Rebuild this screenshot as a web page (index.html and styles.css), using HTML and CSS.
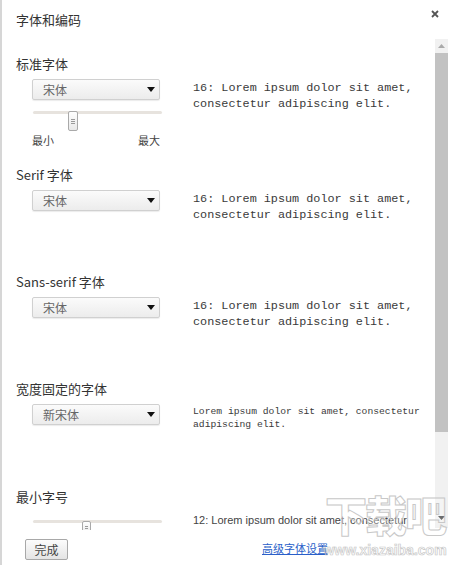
FILE: index.html
```html
<!DOCTYPE html>
<html lang="zh-CN">
<head>
<meta charset="utf-8">
<title>字体和编码</title>
<link rel="stylesheet" href="styles.css">
</head>
<body>
<div class="dialog">
  <header class="header">
    <h1 class="title">字体和编码</h1>
    <button class="close" aria-label="关闭">
      <svg width="8" height="8" viewBox="0 0 8 8"><path d="M1 1L7 7M7 1L1 7" stroke="#555" stroke-width="1.8" fill="none"/></svg>
    </button>
  </header>

  <div class="scroll-area">
    <div class="content">
      <section class="section section-first">
        <div class="label">标准字体</div>
        <div class="row">
          <div class="controls">
            <div class="select"><span>宋体</span><svg class="arrow" width="8" height="5" viewBox="0 0 8 5"><path d="M0 0H8L4 5Z" fill="#111"/></svg></div>
            <div class="slider">
              <div class="track"></div>
              <div class="thumb" style="left:35px"></div>
            </div>
            <div class="minmax"><span>最小</span><span>最大</span></div>
          </div>
          <p class="preview">16: Lorem ipsum dolor sit amet, consectetur adipiscing elit.</p>
        </div>
      </section>

      <section class="section">
        <div class="label">Serif 字体</div>
        <div class="row">
          <div class="controls">
            <div class="select"><span>宋体</span><svg class="arrow" width="8" height="5" viewBox="0 0 8 5"><path d="M0 0H8L4 5Z" fill="#111"/></svg></div>
          </div>
          <p class="preview">16: Lorem ipsum dolor sit amet, consectetur adipiscing elit.</p>
        </div>
      </section>

      <section class="section">
        <div class="label">Sans-serif 字体</div>
        <div class="row">
          <div class="controls">
            <div class="select"><span>宋体</span><svg class="arrow" width="8" height="5" viewBox="0 0 8 5"><path d="M0 0H8L4 5Z" fill="#111"/></svg></div>
          </div>
          <p class="preview">16: Lorem ipsum dolor sit amet, consectetur adipiscing elit.</p>
        </div>
      </section>

      <section class="section section-fixed">
        <div class="label">宽度固定的字体</div>
        <div class="row">
          <div class="controls">
            <div class="select"><span>新宋体</span><svg class="arrow" width="8" height="5" viewBox="0 0 8 5"><path d="M0 0H8L4 5Z" fill="#111"/></svg></div>
          </div>
          <p class="preview preview-mono-small">Lorem ipsum dolor sit amet, consectetur adipiscing elit.</p>
        </div>
      </section>

      <section class="section section-last">
        <div class="label">最小字号</div>
        <div class="row">
          <div class="controls">
            <div class="slider slider-small">
              <div class="track"></div>
              <div class="thumb" style="left:49px"></div>
            </div>
          </div>
          <p class="preview preview-sans">12: Lorem ipsum dolor sit amet, consectetur</p>
        </div>
      </section>
    </div>

    <div class="scrollbar">
      <div class="sb-btn sb-up"><svg width="7" height="4" viewBox="0 0 7 4"><path d="M0 4H7L3.5 0Z" fill="#aaa"/></svg></div>
      <div class="sb-thumb"></div>
      <div class="sb-rest"></div>
      <div class="sb-btn sb-down"><svg width="7" height="4" viewBox="0 0 7 4"><path d="M0 0H7L3.5 4Z" fill="#333"/></svg></div>
    </div>
  </div>

  <footer class="footer">
    <button class="done">完成</button>
    <a class="advanced" href="#">高级字体设置</a>
  </footer>

  <div class="watermark" aria-hidden="true">
    <div class="wm-logo">下载吧</div>
    <div class="wm-url">www.xiazaiba.com</div>
  </div>
</div>
</body>
</html>
```

FILE: styles.css
```css
* { box-sizing: border-box; }

html, body {
  margin: 0;
  padding: 0;
  background: #fff;
}

.dialog {
  position: relative;
  width: 451px;
  height: 565px;
  overflow: hidden;
  background: #fff;
  border-left: 2px solid #d6d6d6;
  font-family: "Noto Sans CJK SC", "Noto Sans", sans-serif;
  color: #333;
}

.header {
  height: 39px;
  padding: 11px 0 0 14px;
}

.title {
  margin: 0;
  font-size: 13px;
  line-height: 18px;
  font-weight: normal;
  color: #333;
}

.close {
  position: absolute;
  top: 9px;
  right: 11px;
  width: 10px;
  height: 10px;
  padding: 0;
  border: 0;
  background: none;
  display: flex;
  align-items: center;
  justify-content: center;
}

.scroll-area {
  display: flex;
  height: 491px;
  overflow: hidden;
}

.content {
  flex: 1;
  padding: 16px 0 0 14px;
}

.section {
  min-height: 107px;
}

.section-first {
  min-height: 111px;
}

.section-fixed {
  min-height: 108px;
}

.label {
  font-size: 13px;
  line-height: 18px;
  color: #333;
  margin-bottom: 6px;
}

.row {
  display: flex;
  padding-left: 16px;
  gap: 33px;
}

.controls {
  width: 128px;
  flex: none;
}

.select {
  height: 21px;
  display: flex;
  align-items: center;
  justify-content: space-between;
  padding: 0 4px 0 10px;
  border: 1px solid #d0d0d0;
  border-radius: 2px;
  background: linear-gradient(#fbfbfb, #ececec);
  box-shadow: 0 1px 1px rgba(0, 0, 0, 0.08);
  font-size: 12px;
  color: #666;
}

.select .arrow {
  display: block;
}

.slider {
  position: relative;
  width: 129px;
  height: 20px;
  margin: 11px 0 0 1px;
}

.track {
  height: 3px;
  margin-top: 8px;
  background: #e7e3de;
  border-radius: 2px;
}

.thumb {
  position: absolute;
  top: 0;
  width: 10px;
  height: 20px;
  border: 1px solid #a9a9a9;
  border-radius: 2px;
  background: linear-gradient(#fefefe, #e9e9e9);
}

.thumb::after {
  content: "";
  position: absolute;
  left: 2px;
  top: 7px;
  width: 4px;
  height: 5px;
  background: linear-gradient(#9a9a9a 0 1px, transparent 1px 2px, #9a9a9a 2px 3px, transparent 3px 4px, #9a9a9a 4px 5px);
}

.slider-small {
  height: 18px;
  margin-top: 0;
}

.slider-small .thumb {
  top: 1px;
  width: 9px;
  height: 14px;
}

.slider-small .thumb::after {
  top: 4px;
  left: 2px;
  width: 3px;
}

.minmax {
  display: flex;
  justify-content: space-between;
  margin-top: 2px;
  font-size: 11px;
  line-height: 14px;
  color: #444;
}

.preview {
  margin: 1px 0 0;
  width: 235px;
  font-family: "Liberation Mono", "DejaVu Sans Mono", monospace;
  font-size: 11.8px;
  line-height: 16px;
  color: #3a3a3a;
}

.preview-mono-small {
  font-size: 9.7px;
  line-height: 13px;
  margin-top: 1px;
}

.preview-sans {
  margin-top: 0;
  white-space: nowrap;
  font-family: "Liberation Sans", "Noto Sans CJK SC", sans-serif;
  font-size: 11px;
  line-height: 17px;
  color: #444;
}

.scrollbar {
  width: 13px;
  flex: none;
  margin: 0 3px 2px 0;
  display: flex;
  flex-direction: column;
  background: #f1f1f1;
}

.sb-btn {
  height: 14px;
  display: flex;
  align-items: center;
  justify-content: center;
  flex: none;
}

.sb-thumb {
  height: 379px;
  flex: none;
  background: #c2c2c2;
}

.sb-rest {
  flex: 1;
}

.sb-down {
  margin-bottom: 3px;
}

.footer {
  display: flex;
  align-items: center;
  padding: 9px 0 0 23px;
}

.done {
  width: 43px;
  height: 21px;
  padding: 0;
  border: 1px solid #a8a8a8;
  border-radius: 2px;
  background: linear-gradient(#fcfcfc, #e4e4e4);
  font-family: "Noto Sans CJK SC", sans-serif;
  font-size: 12px;
  color: #444;
}

.advanced {
  margin: -4px 0 0 194px;
  font-size: 11px;
  line-height: 14px;
  color: #2a5fc9;
  text-decoration: underline;
}

.watermark {
  position: absolute;
  left: 318px;
  top: 484px;
  width: 130px;
  pointer-events: none;
  text-align: center;
}

.wm-logo {
  font-family: "Noto Sans CJK SC", sans-serif;
  font-weight: 900;
  font-size: 42px;
  line-height: 60px;
  letter-spacing: -2px;
  color: rgba(255, 255, 255, 0.3);
  -webkit-text-stroke: 1px #c8c8c8;
}

.wm-url {
  margin-top: -2px;
  font-family: "Liberation Sans", sans-serif;
  font-weight: bold;
  font-size: 14px;
  line-height: 16px;
  color: transparent;
  -webkit-text-stroke: 0.7px #c8c8c8;
}
```
